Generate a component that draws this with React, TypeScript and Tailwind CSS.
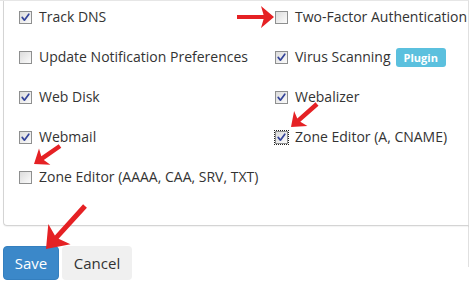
import React from "react";

function Box({ checked, focus }: { checked?: boolean; focus?: boolean }) {
  return (
    <span
      className={
        "relative inline-block w-[13px] h-[13px] shrink-0 border border-[#8e8f8f] bg-gradient-to-br from-[#dcdcdc] to-[#fbfbfb] " +
        (focus ? "outline outline-1 outline-dotted outline-[#222] outline-offset-0" : "")
      }
    >
      {checked && (
        <svg viewBox="0 0 11 11" className="absolute left-0 top-0 w-[11px] h-[11px]">
          <path d="M2.2 5.4 L4.4 8.2 L8.8 2.2" fill="none" stroke="#34449a" strokeWidth="1.7" strokeLinecap="round" strokeLinejoin="round" />
        </svg>
      )}
    </span>
  );
}

function Item({ label, checked, focus, badge }: { label: string; checked?: boolean; focus?: boolean; badge?: boolean }) {
  return (
    <div className="flex items-center h-[20px]">
      <Box checked={checked} focus={focus} />
      <span className="ml-[7px] text-[14px] leading-[20px] text-[#333] whitespace-nowrap">{label}</span>
      {badge && (
        <span className="ml-[5px] h-[19px] px-[8px] rounded-[3px] bg-[#5bc0de] text-white text-[11px] font-bold leading-[19px]">
          Plugin
        </span>
      )}
    </div>
  );
}

function arrowPts(tx: number, ty: number, hx: number, hy: number, sw: number, hl: number, hw: number) {
  const dx = hx - tx, dy = hy - ty;
  const L = Math.hypot(dx, dy);
  const ux = dx / L, uy = dy / L;
  const px = -uy, py = ux;
  const bx = hx - ux * hl, by = hy - uy * hl;
  const nx = hx - ux * (hl * 0.8), ny = hy - uy * (hl * 0.8);
  const p = (x: number, y: number) => `${x.toFixed(1)},${y.toFixed(1)}`;
  return [
    p(tx + px * sw / 2, ty + py * sw / 2),
    p(nx + px * sw / 2, ny + py * sw / 2),
    p(bx + px * hw / 2, by + py * hw / 2),
    p(hx, hy),
    p(bx - px * hw / 2, by - py * hw / 2),
    p(nx - px * sw / 2, ny - py * sw / 2),
    p(tx - px * sw / 2, ty - py * sw / 2),
  ].join(" ");
}

export default function App() {
  return (
    <div className="relative w-[469px] h-[286px] bg-white overflow-hidden" style={{ fontFamily: '"Open Sans", sans-serif' }}>
      <div className="border-t border-[#e6e6e6] border-r w-[469px] h-[267px] border-r-[#e0e0e0]">
        <div className="ml-[3px] w-[470px] border-l border-b border-[#d4d4d4] rounded-bl-[4px] shadow-[0_1px_1px_rgba(0,0,0,0.05)] pt-[6px] pb-[38px] pl-[15px]">
          <div className="grid grid-cols-[256px_256px] gap-y-[20px]">
            <Item label="Track DNS" checked />
            <Item label="Two-Factor Authentication" />
            <Item label="Update Notification Preferences" />
            <Item label="Virus Scanning" checked badge />
            <Item label="Web Disk" checked />
            <Item label="Webalizer" checked />
            <Item label="Webmail" checked />
            <Item label="Zone Editor (A, CNAME)" checked focus />
            <Item label="Zone Editor (AAAA, CAA, SRV, TXT)" />
          </div>
        </div>
        <div className="flex gap-[3px] ml-[3px] mt-[20px]">
          <button className="w-[56px] h-[34px] rounded-[4px] bg-[#3b88c9] border border-[#347fbf] text-white text-[15px]">Save</button>
          <button className="w-[70px] h-[34px] rounded-[4px] bg-[#f0f0f0] text-[#333] text-[15px]">Cancel</button>
        </div>
      </div>
      <svg className="absolute left-0 top-0 pointer-events-none" width="469" height="286">
        <g fill="#e52124">
          <polygon points={arrowPts(237, 17, 274, 17, 4, 13, 22)} />
          <polygon points={arrowPts(317, 104, 291, 127, 4.5, 13, 20)} />
          <polygon points={arrowPts(60, 146, 34, 164, 4.5, 13, 20)} />
          <polygon points={arrowPts(85, 206, 46, 249, 5, 20, 30)} />
        </g>
      </svg>
    </div>
  );
}
